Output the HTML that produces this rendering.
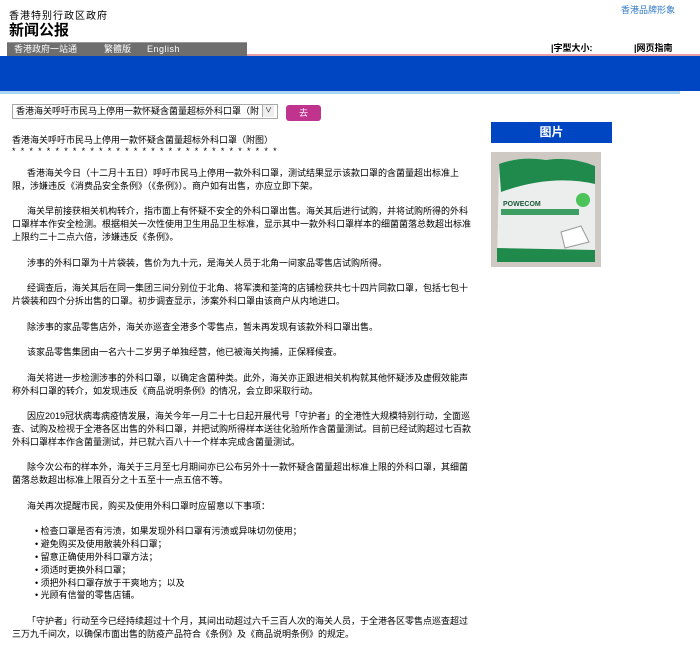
<!DOCTYPE html>
<html><head><meta charset="utf-8"><style>
body{margin:0;width:700px;height:650px;overflow:hidden;background:#fff;font-family:"Liberation Sans","Noto Sans CJK SC",sans-serif;color:#000;position:relative}
.a{position:absolute;white-space:nowrap}
.t{font-size:9px;line-height:12.8px}
p{margin:0 0 12.8px 0}
</style></head><body>
<div class="a" style="left:9px;top:7px;font-size:10px;letter-spacing:1px">香港特别行政区政府</div>
<div class="a" style="left:9px;top:19px;font-size:15px;font-weight:bold">新闻公报</div>
<div class="a" style="left:621px;top:3px;font-size:9px;color:#2f78c8">香港品牌形象</div>
<div class="a" style="left:7px;top:42px;width:240px;height:14px;background:#6e6e6e;border-top:1px solid #999"></div>
<div class="a" style="left:14px;top:43px;font-size:9px;color:#fff;line-height:13px">香港政府一站通</div>
<div class="a" style="left:104px;top:43px;font-size:9px;color:#fff;line-height:13px">繁體版</div>
<div class="a" style="left:147px;top:43px;font-size:9px;color:#fff;line-height:13px;letter-spacing:.5px">English</div>
<div class="a" style="left:551px;top:41px;font-size:9px;font-weight:bold">|字型大小:</div>
<div class="a" style="left:634px;top:41px;font-size:9px;font-weight:bold">|网页指南</div>
<div class="a" style="left:247px;top:54px;width:453px;height:2px;background:#e8a0a8"></div>
<div class="a" style="left:0;top:56px;width:700px;height:35px;background:#0046c2"></div>
<div class="a" style="left:0;top:91px;width:680px;height:3px;background:#a9d4f2"></div>
<div class="a" style="left:12px;top:104px;width:261px;height:13px;border:1px solid #a8a8a8;font-size:9px;line-height:13px;overflow:hidden;padding-left:3px;box-sizing:content-box">香港海关呼吁市民马上停用一款怀疑含菌量超标外科口罩（附</div>
<div class="a" style="left:262px;top:105px;width:11px;height:12px;background:#eee;border-left:1px solid #aaa;font-size:7px;text-align:center;line-height:12px">∨</div>
<div class="a" style="left:286px;top:105px;width:35px;height:16px;background:#c0348e;border-radius:3px;color:#fff;font-size:9px;text-align:center;line-height:16px">去</div>
<div class="a" style="left:491px;top:122px;width:121px;height:21px;background:#0046c2;color:#fff;font-weight:bold;font-size:12px;text-align:center;line-height:21px">图片</div>
<svg class="a" style="left:491px;top:152px" width="110" height="115" viewBox="0 0 110 115">
<rect width="110" height="115" fill="#cfc9c4"/>
<path d="M8 12 Q30 4 55 8 Q80 4 104 14 L104 108 L6 110 Z" fill="#eceeee"/>
<path d="M8 12 Q30 4 55 8 Q80 4 104 14 L104 32 Q60 22 10 40 Z" fill="#1f8a4c"/>
<path d="M6 96 L104 98 L104 110 L6 110 Z" fill="#1f8a4c"/>
<rect x="10" y="57" width="78" height="6" fill="#3c9e62"/>
<text x="12" y="54" font-size="7" font-weight="bold" fill="#1a5a3a" font-family="Liberation Sans">POWECOM</text>
<circle cx="92" cy="48" r="7" fill="#4bc35a"/>
<path d="M70 80 L90 74 L98 90 L74 96 Z" fill="#fff" stroke="#999" stroke-width="1"/>
</svg>
<div class="a t" style="left:12px;top:134px">香港海关呼吁市民马上停用一款怀疑含菌量超标外科口罩（附图）</div>
<div class="a t" style="left:12px;top:145px;letter-spacing:5.2px">*******************************</div>
<div class="a t" style="left:12px;top:167px">
<p>&nbsp;&nbsp;&nbsp;&nbsp;&nbsp;&nbsp;香港海关今日（十二月十五日）呼吁市民马上停用一款外科口罩，测试结果显示该款口罩的含菌量超出标准上<br>限，涉嫌违反《消费品安全条例》（《条例》）。商户如有出售，亦应立即下架。</p>
<p>&nbsp;&nbsp;&nbsp;&nbsp;&nbsp;&nbsp;海关早前接获相关机构转介，指市面上有怀疑不安全的外科口罩出售。海关其后进行试购，并将试购所得的外科<br>口罩样本作安全检测。根据相关一次性使用卫生用品卫生标准，显示其中一款外科口罩样本的细菌菌落总数超出标准<br>上限约二十二点六倍，涉嫌违反《条例》。</p>
<p>&nbsp;&nbsp;&nbsp;&nbsp;&nbsp;&nbsp;涉事的外科口罩为十片袋装，售价为九十元，是海关人员于北角一间家品零售店试购所得。</p>
<p>&nbsp;&nbsp;&nbsp;&nbsp;&nbsp;&nbsp;经调查后，海关其后在同一集团三间分别位于北角、将军澳和荃湾的店铺检获共七十四片同款口罩，包括七包十<br>片袋装和四个分拆出售的口罩。初步调查显示，涉案外科口罩由该商户从内地进口。</p>
<p>&nbsp;&nbsp;&nbsp;&nbsp;&nbsp;&nbsp;除涉事的家品零售店外，海关亦巡查全港多个零售点，暂未再发现有该款外科口罩出售。</p>
<p>&nbsp;&nbsp;&nbsp;&nbsp;&nbsp;&nbsp;该家品零售集团由一名六十二岁男子单独经营，他已被海关拘捕，正保释候查。</p>
<p>&nbsp;&nbsp;&nbsp;&nbsp;&nbsp;&nbsp;海关将进一步检测涉事的外科口罩，以确定含菌种类。此外，海关亦正跟进相关机构就其他怀疑涉及虚假效能声<br>称外科口罩的转介，如发现违反《商品说明条例》的情况，会立即采取行动。</p>
<p>&nbsp;&nbsp;&nbsp;&nbsp;&nbsp;&nbsp;因应2019冠状病毒病疫情发展，海关今年一月二十七日起开展代号「守护者」的全港性大规模特别行动，全面巡<br>查、试购及检视于全港各区出售的外科口罩，并把试购所得样本送往化验所作含菌量测试。目前已经试购超过七百款<br>外科口罩样本作含菌量测试，并已就六百八十一个样本完成含菌量测试。</p>
<p>&nbsp;&nbsp;&nbsp;&nbsp;&nbsp;&nbsp;除今次公布的样本外，海关于三月至七月期间亦已公布另外十一款怀疑含菌量超出标准上限的外科口罩，其细菌<br>菌落总数超出标准上限百分之十五至十一点五倍不等。</p>
<p>&nbsp;&nbsp;&nbsp;&nbsp;&nbsp;&nbsp;海关再次提醒市民，购买及使用外科口罩时应留意以下事项：</p>
<p style="padding-left:23px">• 检查口罩是否有污渍，如果发现外科口罩有污渍或异味切勿使用；<br>• 避免购买及使用散装外科口罩；<br>• 留意正确使用外科口罩方法；<br>• 须适时更换外科口罩；<br>• 须把外科口罩存放于干爽地方；以及<br>• 光顾有信誉的零售店铺。</p>
<p>&nbsp;&nbsp;&nbsp;&nbsp;&nbsp;&nbsp;「守护者」行动至今已经持续超过十个月，其间出动超过六千三百人次的海关人员，于全港各区零售点巡查超过<br>三万九千间次，以确保市面出售的防疫产品符合《条例》及《商品说明条例》的规定。</p>
</div>
</body></html>
